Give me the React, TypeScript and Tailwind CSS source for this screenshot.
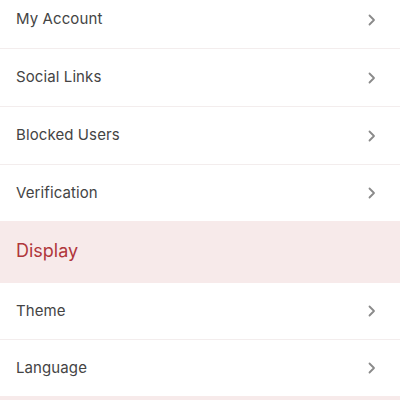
import React from "react";

function Chevron() {
  return (
    <svg width="8" height="12" viewBox="0 0 8 12" fill="none" className="shrink-0">
      <path d="M1.5 1.5L6 6L1.5 10.5" stroke="#8a8a8a" strokeWidth="1.8" strokeLinecap="round" strokeLinejoin="round" />
    </svg>
  );
}

function Row({ label, h }: { label: string; h: "a" | "b" | "c" }) {
  const cls =
    h === "a"
      ? "h-[58px] border-b border-[#f3eded]"
      : h === "b"
      ? "h-[56px]"
      : "h-[57px] border-b border-[#f3eded]";
  return (
    <div className={`flex items-center justify-between pl-4 pr-[24px] bg-white ${cls}`}>
      <span className="text-[15px] text-[#444444] tracking-[0.1px]">{label}</span>
      <Chevron />
    </div>
  );
}

export default function App() {
  return (
    <div className="w-[400px] h-[400px] overflow-hidden bg-white" style={{ fontFamily: "Inter, 'Noto Sans', sans-serif" }}>
      <div className="-mt-[9px] flex flex-col">
        <Row label="My Account" h="a" />
        <Row label="Social Links" h="a" />
        <Row label="Blocked Users" h="a" />
        <Row label="Verification" h="b" />
        <div className="h-[62px] flex items-center px-4 pb-[3px] bg-[#f7eaea]">
          <span className="text-[18px] text-[#b0363b]">Display</span>
        </div>
        <Row label="Theme" h="c" />
        <Row label="Language" h="b" />
        <div className="h-[61px] bg-[#f7eaea]" />
      </div>
    </div>
  );
}
